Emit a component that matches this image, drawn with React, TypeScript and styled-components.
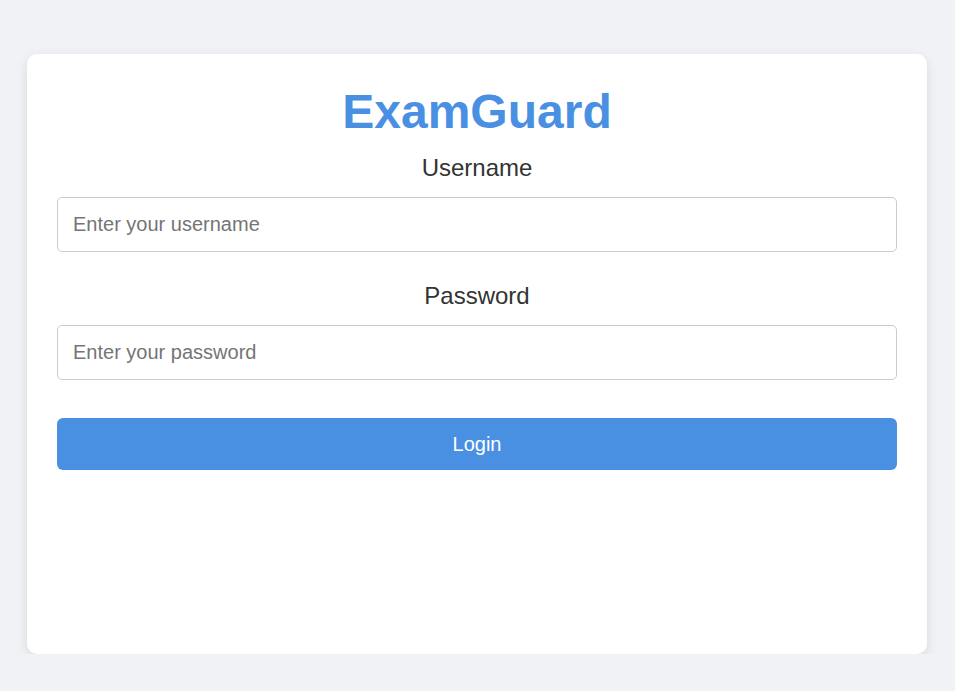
import React from "react";
import styled, { createGlobalStyle } from "styled-components";

const GlobalStyle = createGlobalStyle`
  html, body {
    margin: 0;
    padding: 0;
    background: #f0f2f5;
    font-family: "Liberation Sans", Arial, sans-serif;
  }
  * { box-sizing: border-box; }
`;

const Page = styled.div`
  padding: 54px 28px 0 27px;
  display: flex;
  justify-content: center;
`;

const Card = styled.div`
  width: 900px;
  height: 600px;
  background: #ffffff;
  border-radius: 10px;
  box-shadow: 0 4px 12px rgba(0, 0, 0, 0.1);
  padding: 30px;
  display: flex;
  flex-direction: column;
`;

const Title = styled.h1`
  margin: 0 0 15px;
  font-size: 48px;
  font-weight: bold;
  line-height: 55px;
  color: #4a90e2;
  text-align: center;
`;

const Group = styled.div<{ $gap: number }>`
  display: flex;
  flex-direction: column;
  margin-bottom: ${(p) => p.$gap}px;
`;

const Label = styled.label`
  display: block;
  font-size: 24px;
  line-height: 28px;
  color: #333333;
  text-align: center;
  margin-bottom: 15px;
`;

const Input = styled.input`
  width: 100%;
  height: 55px;
  padding: 0 15px;
  font-size: 20px;
  font-family: "Liberation Sans", Arial, sans-serif;
  border: 1px solid #cccccc;
  border-radius: 5px;
  color: #333333;
  outline: none;
  &::placeholder {
    color: #757575;
  }
`;

const Button = styled.button`
  width: 100%;
  height: 52px;
  border: none;
  border-radius: 6px;
  background: #4a90e2;
  color: #ffffff;
  font-size: 20px;
  font-family: "Liberation Sans", Arial, sans-serif;
  cursor: pointer;
`;

export default function App() {
  return (
    <>
      <GlobalStyle />
      <Page>
        <Card>
          <Title>ExamGuard</Title>
          <Group $gap={30}>
            <Label htmlFor="username">Username</Label>
            <Input id="username" type="text" placeholder="Enter your username" />
          </Group>
          <Group $gap={38}>
            <Label htmlFor="password">Password</Label>
            <Input id="password" type="password" placeholder="Enter your password" />
          </Group>
          <Button type="button">Login</Button>
        </Card>
      </Page>
    </>
  );
}
